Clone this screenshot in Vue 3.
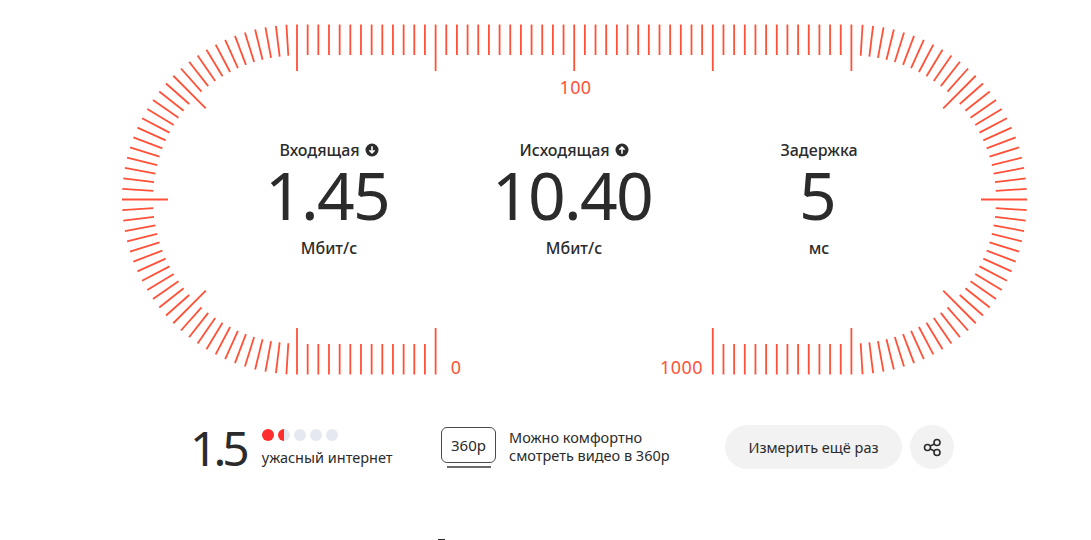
<script setup>
// Шкала: две дуги по 26 делений и прямые участки по 13 делений
const STEP = 138.6 / 13
const ANGLE = Math.PI / 52
const CY = 199.5
const LEFT = 297
const RIGHT = 852
const OUTER = 175
const MINOR = 31
const MAJOR = 46

function arcTick(cx, i, side) {
  const a = i * ANGLE
  const len = i % 13 === 0 ? MAJOR : MINOR
  const dx = Math.cos(a) * side
  const dy = Math.sin(a)
  return {
    x1: cx + dx * OUTER,
    y1: CY - dy * OUTER,
    x2: cx + dx * (OUTER - len),
    y2: CY - dy * (OUTER - len)
  }
}

const ticks = []

// верх
for (let i = 0; i <= 52; i++) {
  const x = LEFT + i * STEP
  ticks.push({ x1: x, y1: 24.5, x2: x, y2: i % 13 === 0 ? 71 : 55 })
}
// низ без промежутка под 0 и 1000
for (let i = 0; i <= 52; i++) {
  if (i > 13 && i < 39) continue
  const x = LEFT + i * STEP
  ticks.push({ x1: x, y1: 374.5, x2: x, y2: i % 13 === 0 ? 328 : 344 })
}
// дуги
for (let i = -25; i <= 25; i++) {
  ticks.push(arcTick(LEFT, i, -1))
  ticks.push(arcTick(RIGHT, i, 1))
}

const readings = [
  { title: 'Входящая', icon: 'down', value: '1.45', unit: 'Мбит/с' },
  { title: 'Исходящая', icon: 'up', value: '10.40', unit: 'Мбит/с' },
  { title: 'Задержка', icon: '', value: '5', unit: 'мс' }
]

const dots = ['full', 'half', 'off', 'off', 'off']
</script>

<template>
  <div class="page">
    <div class="gauge">
      <svg class="scale" width="1091" height="400" viewBox="0 0 1091 400">
        <line
          v-for="(t, i) in ticks"
          :key="i"
          :x1="t.x1"
          :y1="t.y1"
          :x2="t.x2"
          :y2="t.y2"
          stroke="#ff5138"
          stroke-width="1.8"
        />
        <text class="mark" x="575.5" y="94" text-anchor="middle">100</text>
        <text class="mark" x="456" y="374" text-anchor="middle">0</text>
        <text class="mark" x="681.5" y="374" text-anchor="middle">1000</text>
      </svg>

      <div class="readings">
        <div v-for="r in readings" :key="r.title" class="reading">
          <div class="title">
            {{ r.title }}
            <svg v-if="r.icon" class="arrow" :class="r.icon" width="14" height="14" viewBox="0 0 14 14">
              <circle cx="7" cy="7" r="6.5" fill="#2b2b2b" />
              <path d="M7 3.2v6.4M4.4 7.2 7 9.9l2.6-2.7" fill="none" stroke="#fff" stroke-width="1.6" />
            </svg>
          </div>
          <div class="value">{{ r.value }}</div>
          <div class="unit">{{ r.unit }}</div>
        </div>
      </div>
    </div>

    <div class="summary">
      <div class="rating">
        <span class="score">1.5</span>
        <div>
          <div class="dots">
            <span v-for="(d, i) in dots" :key="i" class="dot" :class="d"></span>
          </div>
          <div class="verdict">ужасный интернет</div>
        </div>
      </div>

      <div class="video">
        <div class="screen">
          <div class="screen-box">360p</div>
          <div class="screen-stand"></div>
        </div>
        <div class="video-text">Можно комфортно<br />смотреть видео в 360p</div>
      </div>

      <div class="actions">
        <button class="again">Измерить ещё раз</button>
        <button class="share">
          <svg width="20" height="20" viewBox="0 0 20 20" fill="none" stroke="#2b2b2b" stroke-width="1.6">
            <circle cx="5.5" cy="10.5" r="3" />
            <circle cx="15" cy="5.5" r="3" />
            <circle cx="15" cy="15.5" r="3" />
            <path d="M8.2 9.1 12.3 7M8.2 11.9l4.1 2.1" />
          </svg>
        </button>
      </div>
    </div>

    <div class="cutoff"></div>
  </div>
</template>

<style scoped>
.page {
  width: 1091px;
  height: 540px;
  overflow: hidden;
  font-family: "Noto Sans", sans-serif;
  color: #2b2b2b;
}

.gauge {
  display: grid;
  height: 400px;
}

.scale,
.readings {
  grid-area: 1 / 1;
}

.mark {
  font-family: "Noto Sans", sans-serif;
  font-size: 18px;
  letter-spacing: 0.4px;
  fill: #ff5138;
}

.readings {
  display: flex;
  padding: 140px 0 0 206.5px;
}

.reading {
  width: 245px;
  text-align: center;
}

.title {
  display: flex;
  justify-content: center;
  align-items: center;
  gap: 5px;
  height: 20px;
  font-size: 16px;
  font-weight: 500;
}

.arrow.up {
  transform: rotate(180deg);
}

.value {
  font-size: 66px;
  line-height: 68px;
  letter-spacing: -1.7px;
  padding-right: 4px;
}

.unit {
  font-size: 16px;
  font-weight: 500;
  line-height: 20px;
  margin-top: 10px;
}

.summary {
  display: flex;
  align-items: center;
  height: 94px;
  padding-left: 192px;
}

.rating {
  display: flex;
  align-items: center;
  gap: 16px;
  width: 249px;
}

.score {
  font-size: 48px;
  letter-spacing: -4px;
  margin-left: -2px;
}

.dots {
  display: flex;
  gap: 4px;
  margin-bottom: 7px;
}

.dot {
  width: 12px;
  height: 12px;
  border-radius: 50%;
  background: #e6e8f0;
}

.dot.full {
  background: #ff2d2d;
}

.dot.half {
  background: linear-gradient(90deg, #ff2d2d 50%, #e6e8f0 50%);
}

.verdict {
  font-size: 14.5px;
  line-height: 18px;
}

.video {
  display: flex;
  align-items: center;
  gap: 13px;
  width: 284px;
}

.screen-box {
  width: 55px;
  height: 36px;
  box-sizing: border-box;
  border: 1.5px solid #4a4a4a;
  border-radius: 6px;
  display: flex;
  align-items: center;
  justify-content: center;
  font-size: 15px;
}

.screen-stand {
  width: 44px;
  height: 2px;
  margin: 3px auto 0;
  background: #6a6a6a;
}

.video-text {
  font-size: 14.5px;
  line-height: 18px;
  margin-top: -2px;
}

.actions {
  display: flex;
  gap: 8px;
}

button {
  border: 0;
  background: #f2f2f2;
  color: #2b2b2b;
  font-family: inherit;
  height: 44px;
  border-radius: 22px;
  padding: 0;
}

.again {
  width: 177px;
  font-size: 14.5px;
}

.share {
  width: 44px;
  display: flex;
  align-items: center;
  justify-content: center;
}

/* верх следующего блока, обрезанного краем окна */
.cutoff {
  width: 7px;
  height: 1px;
  margin: 45px 0 0 438px;
  background: #2b2b2b;
}
</style>
